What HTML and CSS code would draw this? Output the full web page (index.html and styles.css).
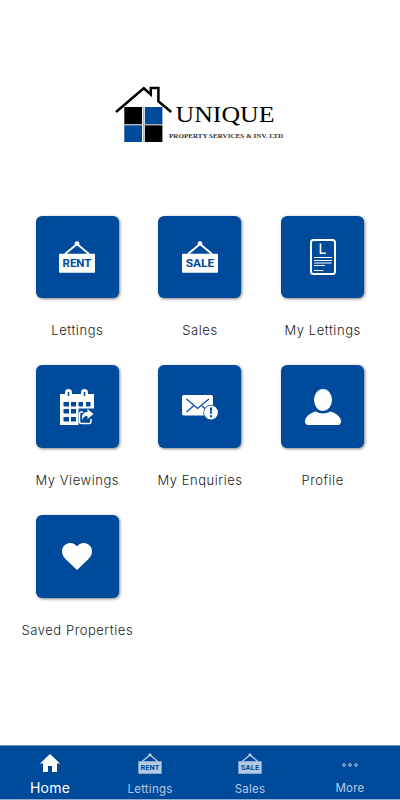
FILE: index.html
```html
<!DOCTYPE html>
<html lang="en">
<head>
    <meta charset="UTF-8">
    <meta name="viewport" content="width=device-width, initial-scale=1.0">
    <title>Unique Property Services</title>
    <link rel="stylesheet" href="styles.css">
</head>
<body>

<!-- Shared sign icon, used in the menu and the tab bar -->
<svg class="defs" width="0" height="0">
    <symbol id="sign" viewBox="0 0 36 32">
        <path d="M6 13L18 3l12 10" fill="none" stroke="currentColor" stroke-width="2"/>
        <circle cx="18" cy="2.6" r="2.4" fill="currentColor"/>
        <rect y="12.7" width="36" height="19" rx=".7" fill="currentColor"/>
    </symbol>
</svg>

<header class="header">
    <svg class="logo" viewBox="0 0 175 60" role="img" aria-label="Unique Property Services">
        <path d="M1 27L28.8 3.2l7 6.3V3h7.6v13.3L56.3 27" fill="none" stroke="#000" stroke-width="2.5"/>
        <rect x="9.3" y="22" width="17.7" height="17.2"/>
        <rect x="29.8" y="22" width="17.6" height="17.2" fill="#004a9c"/>
        <rect x="9.3" y="40.2" width="17.7" height="16.8" fill="#004a9c"/>
        <rect x="29.8" y="40.2" width="17.6" height="16.8"/>
        <path d="M28.4 22v35M9.3 39.7h38" stroke="#a9a9a9" stroke-width="1"/>
        <text class="logo-name" x="60.5" y="37.3" textLength="99" lengthAdjust="spacingAndGlyphs">UNIQUE</text>
        <text class="logo-sub" x="54" y="52.5" textLength="114" lengthAdjust="spacingAndGlyphs">PROPERTY SERVICES &amp; INV. LTD</text>
    </svg>
</header>

<main class="menu">
    <a class="item">
        <span class="tile">
            <svg width="36" height="32" viewBox="0 0 36 32"><use href="#sign"/><text class="sign-text" x="18" y="26.3" textLength="29" lengthAdjust="spacingAndGlyphs">RENT</text></svg>
        </span>
        <span class="label">Lettings</span>
    </a>
    <a class="item">
        <span class="tile">
            <svg width="36" height="32" viewBox="0 0 36 32"><use href="#sign"/><text class="sign-text" x="18" y="26.3" textLength="28.5" lengthAdjust="spacingAndGlyphs">SALE</text></svg>
        </span>
        <span class="label">Sales</span>
    </a>
    <a class="item">
        <span class="tile">
            <svg width="26" height="36" viewBox="0 0 26 36" fill="none" stroke="currentColor">
                <rect x="1" y="1" width="24" height="34" rx="2.5" stroke-width="2"/>
                <path d="M10.500 4.500v9.700h5.500" stroke-width="1.600"/>
                <path d="M4 18.500h18M4 21.500h18M4 24h17.500M4 26.500h11M4 31.500h9.500" stroke-width="1.200"/>
            </svg>
        </span>
        <span class="label">My Lettings</span>
    </a>
    <a class="item">
        <span class="tile">
            <svg width="34" height="36" viewBox="0 0 34 36">
                <path d="M0 5h5V3.500a3.500 3.500 0 0 1 7 0V5h9V3.500a3.500 3.500 0 0 1 7 0V5h6v14.500H18.500V36H0z" fill="currentColor"/>
                <path class="cut" d="M7.800 3h1.500v4H7.800zM23.800 3h1.500v4h-1.500zM3.500 13H9v4.500H3.500zM11 13h5v4.500h-5zM18.500 13h4.500v4.500h-4.500zM26 13h4.500v4.500H26zM3.500 20H9v4.500H3.500zM11 20h5v4.500h-5zM3.500 28H9v4.500H3.500zM11 28h5v4.500h-5z"/>
                <path d="M23 23h-1.500q-2 0-2 2v7.500q0 2 2 2H29q2 0 2-2V30" fill="none" stroke="currentColor" stroke-width="1.500"/>
                <path d="M22.500 31.500c-1.500-6 1-8.500 5-8.500v-3l6 5-6 5v-3c-3 0-4.500 1-5 4.500z" fill="currentColor"/>
            </svg>
        </span>
        <span class="label">My Viewings</span>
    </a>
    <a class="item">
        <span class="tile">
            <svg class="mail" width="36" height="25" viewBox="0 0 36 25">
                <rect width="31" height="20.500" rx="2" fill="currentColor"/>
                <path class="line" d="M4.500 4l11 9.500L27 4M4.500 17l7-6M20 11l4 3.500"/>
                <circle class="cut" cx="29" cy="17.500" r="7.700"/>
                <circle cx="29" cy="17.500" r="6.900" fill="currentColor"/>
                <path class="cut" d="M27.900 12.500h2.200l-.4 6.500h-1.400zM28 20.200h2v2h-2z"/>
            </svg>
        </span>
        <span class="label">My Enquiries</span>
    </a>
    <a class="item">
        <span class="tile">
            <svg width="36" height="36" viewBox="0 0 36 36" fill="currentColor">
                <ellipse cx="18" cy="11" rx="9" ry="11"/>
                <path d="M10.500 22.500q7.500 4 15 0c6 2 10.500 5.500 10.500 10q0 3.500-3.500 3.500h-29Q0 36 0 32.500c0-4.500 4.500-8 10.500-10z"/>
            </svg>
        </span>
        <span class="label">Profile</span>
    </a>
    <a class="item">
        <span class="tile">
            <svg width="30" height="27" viewBox="0 0 30 27" fill="currentColor">
                <path d="M15 27L3.500 16C1 13.500 0 11 0 8.300 0 3.700 3.600 0 8.200 0 11 0 13.500 1.300 15 3.500 16.500 1.300 19 0 21.800 0 26.400 0 30 3.700 30 8.300c0 2.700-1 5.200-3.500 7.700z"/>
            </svg>
        </span>
        <span class="label">Saved Properties</span>
    </a>
</main>

<nav class="tabs">
    <a class="tab active">
        <svg width="20" height="18" viewBox="0 0 20 18" fill="currentColor"><path d="M10 0l10 9.500h-3V18h-5v-6H8v6H3V9.500H0z"/></svg>
        <span>Home</span>
    </a>
    <a class="tab">
        <svg width="24" height="21" viewBox="0 0 36 32"><use href="#sign"/><text class="sign-text" x="18" y="26.500" textLength="29" lengthAdjust="spacingAndGlyphs">RENT</text></svg>
        <span>Lettings</span>
    </a>
    <a class="tab">
        <svg width="24" height="21" viewBox="0 0 36 32"><use href="#sign"/><text class="sign-text" x="18" y="26.500" textLength="28.5" lengthAdjust="spacingAndGlyphs">SALE</text></svg>
        <span>Sales</span>
    </a>
    <a class="tab">
        <svg class="dots" width="16" height="4" viewBox="0 0 16 4" fill="none" stroke="currentColor"><circle cx="2" cy="2" r="1.300"/><circle cx="8" cy="2" r="1.300"/><circle cx="14" cy="2" r="1.300"/></svg>
        <span>More</span>
    </a>
</nav>

</body>
</html>
```

FILE: styles.css
```css
* { box-sizing: border-box; }
body { margin: 0; height: 800px; display: flex; flex-direction: column; background: #fff; color: #222; font-family: Inter, sans-serif; overflow: hidden; }
svg { display: block; }
.defs { position: absolute; }

.header { height: 215.700px; padding: 85px 0 0 115px; }
.logo { width: 175px; height: 60px; overflow: visible; }
.logo-name { font: 24px "Liberation Serif", serif; }
.logo-sub { font: bold 7px "Liberation Serif", serif; fill: #333; }

.menu { flex: 1; display: grid; grid-template-columns: repeat(3, 1fr); grid-auto-rows: 149.7px; padding: 0 16px; }
.item { display: flex; flex-direction: column; align-items: center; }
.tile { width: 83px; height: 82.5px; display: flex; align-items: center; justify-content: center; background: #004a9c; color: #fff; border-radius: 6px; box-shadow: 1px 1px 3px rgba(0, 0, 0, 0.5); }
.label { margin-top: 22px; font-size: 13px; line-height: 20px; font-weight: 300; letter-spacing: 0.55px; white-space: nowrap; }
.sign-text { font: bold 11.5px Roboto, sans-serif; fill: #004a9c; text-anchor: middle; }
.cut { fill: #004a9c; }
.line { fill: none; stroke: #004a9c; stroke-width: 1.2; }
.mail { margin-top: 1px; }

.tabs { height: 55px; display: grid; grid-template-columns: repeat(4, 1fr); background: #004a9c; border-top: 1px solid #6f93bd; border-bottom: 1px solid #8fb0d6; }
.tab { display: flex; flex-direction: column; align-items: center; padding-top: 7px; color: #b5cae3; font-size: 11.5px; line-height: 16px; letter-spacing: 0.25px; }
.tab span { margin-top: 7px; }
.tab.active { padding-top: 8px; color: #fff; font-size: 14px; }
.tab.active span { margin-top: 8px; }
.tab .dots { margin: 10px 0 6px; }
```
